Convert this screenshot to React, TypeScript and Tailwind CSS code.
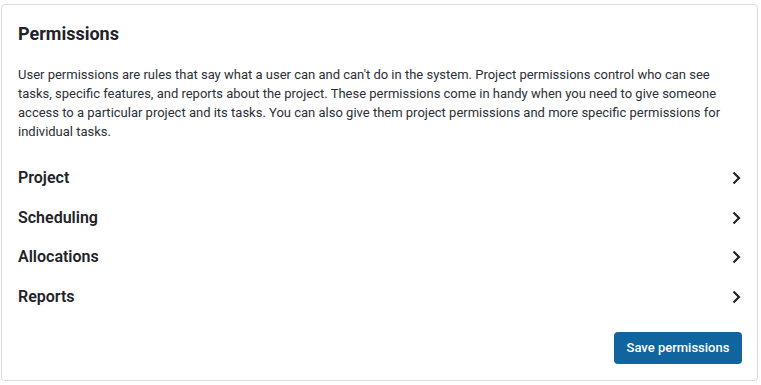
const sections = ["Project", "Scheduling", "Allocations", "Reports"];

const Chevron = () => (
  <svg width="16" height="16" viewBox="0 0 16 16" fill="none" className="text-[#1f2328] -mr-[2px]">
    <path d="M5.5 2.5 L11 8 L5.5 13.5" stroke="currentColor" strokeWidth="2.2" />
  </svg>
);

export default function App() {
  return (
    <div className="bg-white w-[761px] h-[385px] pt-[4px] px-[1px] font-['Roboto',sans-serif]">
      <div className="border border-[#dcdcdc] rounded-[4px] h-[377px] w-[757px] pt-[17px] pl-[16px] pr-[15px]">
        <h2 className="text-[18px] leading-[24px] font-bold text-[#1f2328]">Permissions</h2>
        <p className="mt-[18.5px] text-[13px] leading-[19px] text-[#2b2f36] pr-[4px]">
          User permissions are rules that say what a user can and can't do in the system. Project permissions control who can see
          tasks, specific features, and reports about the project. These permissions come in handy when you need to give someone
          access to a particular project and its tasks. You can also give them project permissions and more specific permissions for
          individual tasks.
        </p>
        <div className="mt-[18px]">
          {sections.map((s) => (
            <div key={s} className="flex items-center justify-between h-[39.5px]">
              <span className="text-[16px] font-semibold text-[#1f2328]">{s}</span>
              <Chevron />
            </div>
          ))}
        </div>
        <div className="flex justify-end mt-[15.5px]">
          <button className="h-[32px] w-[128px] rounded-[4px] bg-[#10659f] text-white text-[13px] font-medium">
            Save permissions
          </button>
        </div>
      </div>
    </div>
  );
}
